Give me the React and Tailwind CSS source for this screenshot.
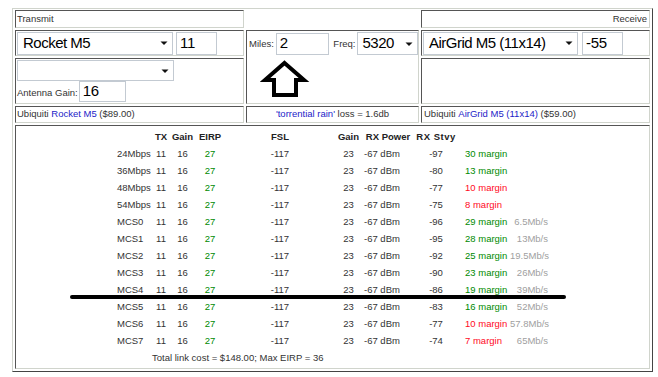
import React from "react"

const rates = [
  { name: "24Mbps", stvy: -97, margin: 30, mbs: "" },
  { name: "36Mbps", stvy: -80, margin: 13, mbs: "" },
  { name: "48Mbps", stvy: -77, margin: 10, mbs: "" },
  { name: "54Mbps", stvy: -75, margin: 8, mbs: "" },
  { name: "MCS0", stvy: -96, margin: 29, mbs: "6.5Mb/s" },
  { name: "MCS1", stvy: -95, margin: 28, mbs: "13Mb/s" },
  { name: "MCS2", stvy: -92, margin: 25, mbs: "19.5Mb/s" },
  { name: "MCS3", stvy: -90, margin: 23, mbs: "26Mb/s" },
  { name: "MCS4", stvy: -86, margin: 19, mbs: "39Mb/s" },
  { name: "MCS5", stvy: -83, margin: 16, mbs: "52Mb/s" },
  { name: "MCS6", stvy: -77, margin: 10, mbs: "57.8Mb/s" },
  { name: "MCS7", stvy: -74, margin: 7, mbs: "65Mb/s" },
]

const cell =
  "border border-t-[#555] border-l-[#555] border-b-[#d0d4cc] border-r-[#d0d4cc] bg-white"

const Arrow = () => (
  <svg width="10" height="6" viewBox="0 0 10 6" className="shrink-0">
    <polygon points="1.5,1.5 8.5,1.5 5,5" fill="#111" />
  </svg>
)

// fake select box, the native one can't be styled to match
const Select = ({ className, text }) => (
  <div
    className={`flex items-center justify-between border border-[#c3cad2] bg-white pl-[5px] pr-[3px] text-[15px] tracking-[-0.5px] text-black ${className}`}
  >
    <span>{text}</span>
    <Arrow />
  </div>
)

const Field = ({ className, text }) => (
  <div
    className={`flex items-center border border-[#c3cad2] bg-white pl-[3px] text-[15px] tracking-[-0.3px] text-black ${className}`}
  >
    {text}
  </div>
)

const App = () => {
  return (
    <div className="relative w-[658px] h-[377px] overflow-hidden bg-white font-['Liberation_Sans',Arial,sans-serif] text-[9.5px] text-[#333]">
      <div className="ml-[12px] mt-[8px] w-[641px] border border-t-[#d0d4cc] border-l-[#d0d4cc] border-b-[#444] border-r-[#444] pt-[1px] px-[2px] pb-[2px]">
        <div className="grid grid-cols-[229px_173px_229px] grid-rows-[18px_26px_46px_17px_244px] gap-[2px]">
          {/* row 1 */}
          <div className={`${cell} flex items-center pl-[1px]`}>Transmit</div>
          <div></div>
          <div className={`${cell} flex items-center justify-end pr-[2px]`}>Receive</div>

          {/* row 2 */}
          <div className={`${cell} flex items-center gap-[3px] pl-[1px]`}>
            <Select className="w-[156px] h-[23px]" text="Rocket M5" />
            <Field className="w-[41px] h-[23px]" text="11" />
          </div>
          <div className={`${cell} row-span-2 flex flex-col pt-[1px] pl-[2px]`}>
            <div className="flex items-center">
              <span className="pt-[2px]">Miles:</span>
              <Field className="ml-[2px] w-[54px] h-[22px]" text="2" />
              <span className="ml-[4px] pt-[2px]">Freq:</span>
              <Select className="ml-[1px] w-[62px] h-[23px]" text="5320" />
            </div>
            <svg width="52" height="42" viewBox="0 0 52 42" className="ml-[11px] mt-[3px]">
              <polygon
                points="24.5,5 44,22 36,22 36,37 14,37 14,22 5,22"
                fill="none"
                stroke="#000"
                strokeWidth="4"
                strokeLinejoin="miter"
              />
            </svg>
          </div>
          <div className={`${cell} flex items-center gap-[4px] pl-[1px]`}>
            <Select className="w-[155px] h-[23px]" text="AirGrid M5 (11x14)" />
            <Field className="w-[41px] h-[23px]" text="-55" />
          </div>

          {/* row 3 */}
          <div className={`${cell} flex flex-col pl-[1px] pt-[1px]`}>
            <Select className="w-[157px] h-[21px]" text="" />
            <div className="flex items-center">
              <span className="pt-[3px]">Antenna Gain:</span>
              <Field className="ml-[1px] w-[47px] h-[21px]" text="16" />
            </div>
          </div>
          <div className={cell}></div>

          {/* row 4 */}
          <div className={`${cell} flex items-center pl-[1px]`}>
            Ubiquiti&nbsp;<span className="text-[#2323c8]">Rocket M5</span>&nbsp;($89.00)
          </div>
          <div className={`${cell} flex items-center justify-center`}>
            <span className="text-[#2323c8]">'torrential rain'</span>&nbsp;loss = 1.6db
          </div>
          <div className={`${cell} flex items-center pl-[2px]`}>
            Ubiquiti&nbsp;<span className="text-[#2323c8]">AirGrid M5 (11x14)</span>&nbsp;($59.00)
          </div>

          {/* row 5 */}
          <div className={`${cell} col-span-3 pt-[2px]`}>
            <div className="mx-auto w-[431px] grid grid-cols-[35px_18px_25px_30px_110px_27px_52px_44px_52px_38px] auto-rows-[17px] leading-[17px]">
              <div></div>
              <div className="text-center font-bold text-[#222]">TX</div>
              <div className="text-center font-bold text-[#222]">Gain</div>
              <div className="text-center font-bold text-[#222]">EIRP</div>
              <div className="text-center font-bold text-[#222]">FSL</div>
              <div className="text-center font-bold text-[#222]">Gain</div>
              <div className="text-center font-bold text-[#222] whitespace-nowrap">RX Power</div>
              <div className="text-center font-bold text-[#222] whitespace-nowrap tracking-[0.5px]">RX Stvy</div>
              <div></div>
              <div></div>
              {rates.map((r) => (
                <React.Fragment key={r.name}>
                  <div>{r.name}</div>
                  <div className="text-center">11</div>
                  <div className="text-center">16</div>
                  <div className="text-center text-[#008a00]">27</div>
                  <div className="text-center">-117</div>
                  <div className="text-center">23</div>
                  <div className="pl-[2px] whitespace-nowrap">-67 dBm</div>
                  <div className="text-center">{r.stvy}</div>
                  <div
                    className={`pl-[7px] whitespace-nowrap ${
                      r.margin > 10 ? "text-[#008a00]" : "text-[#ff0a1e]"
                    }`}
                  >
                    {r.margin} margin
                  </div>
                  <div className="text-right text-[#a0a0a0] whitespace-nowrap">{r.mbs}</div>
                </React.Fragment>
              ))}
              <div className="col-start-2 col-span-9 whitespace-nowrap">
                Total link cost = $148.00; Max EIRP = 36
              </div>
            </div>
          </div>
        </div>
      </div>
      {/* marker line drawn over the table */}
      <div className="absolute left-[70px] top-[295px] w-[496px] h-[4px] rounded-full bg-black"></div>
    </div>
  )
}

export default App
